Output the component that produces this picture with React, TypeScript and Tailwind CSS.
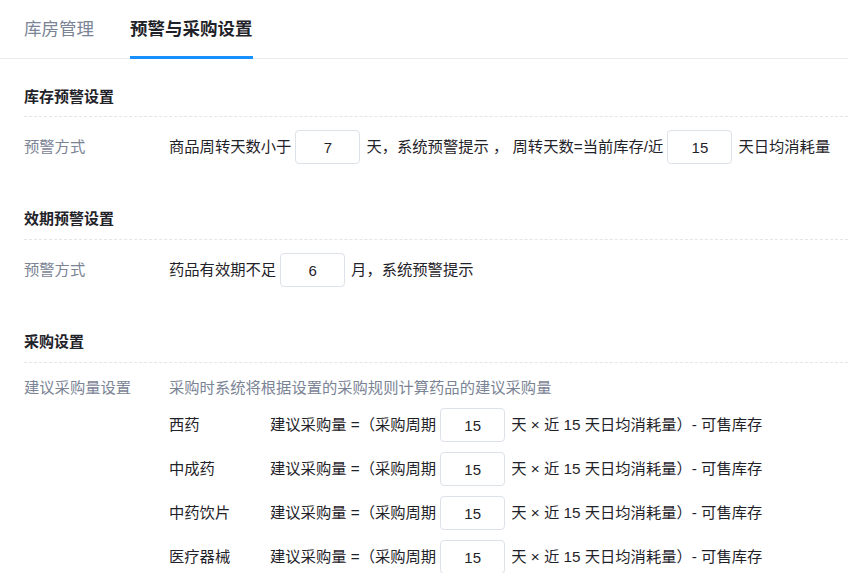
import React from "react";

const font = { fontFamily: '"Liberation Sans", "Noto Sans CJK SC", sans-serif' };

const NumBox: React.FC<{ value: string; className?: string }> = ({ value, className }) => (
  <input
    readOnly
    value={value}
    className={`h-[34px] w-[65px] rounded border border-[#dde1e8] bg-white text-center text-[15px] text-[#1f2329] outline-none ${className ?? ""}`}
  />
);

const SectionTitle: React.FC<{ title: string; first?: boolean }> = ({ title, first }) => (
  <div
    className={`${first ? "mt-[28px] pb-[9px]" : "mt-[45px] pb-[10px]"} border-b border-dashed border-[#e3e5e9] text-[15px] font-bold leading-5 text-[#1f2329]`}
  >
    {title}
  </div>
);

const drugTypes = ["西药", "中成药", "中药饮片", "医疗器械"];

export default function App() {
  return (
    <div className="min-h-screen w-full bg-white text-[15.3px] text-[#1f2329]" style={font}>
      <div className="flex h-[59px] gap-9 border-b border-[#e8eaed] px-6">
        <div className="flex h-[59px] items-center border-b-[3px] border-transparent pt-[3px] text-[17.5px] text-[#7b8495]">
          库房管理
        </div>
        <div className="flex h-[59px] items-center border-b-[3px] border-[#1890ff] pt-[3px] text-[17.5px] font-bold text-[#1f2329]">
          预警与采购设置
        </div>
      </div>

      <div className="pl-6">
        <SectionTitle title="库存预警设置" first />
        <div className="flex items-start pt-[13px]">
          <div className="w-[145px] shrink-0 leading-[34px] text-[#7b8495]">预警方式</div>
          <div className="flex items-center whitespace-nowrap">
            <span>商品周转天数小于</span>
            <NumBox value="7" className="ml-1 mr-[6px]" />
            <span>天，系统预警提示 ， 周转天数=当前库存/近</span>
            <NumBox value="15" className="ml-1 mr-[6px]" />
            <span>天日均消耗量</span>
          </div>
        </div>

        <SectionTitle title="效期预警设置" />
        <div className="flex items-start pt-[13px]">
          <div className="w-[145px] shrink-0 leading-[34px] text-[#7b8495]">预警方式</div>
          <div className="flex items-center whitespace-nowrap">
            <span>药品有效期不足</span>
            <NumBox value="6" className="ml-1 mr-[6px]" />
            <span>月，系统预警提示</span>
          </div>
        </div>

        <SectionTitle title="采购设置" />
        <div className="flex items-start pt-[15px]">
          <div className="w-[145px] shrink-0 leading-5 text-[#7b8495]">建议采购量设置</div>
          <div className="flex flex-col">
            <div className="leading-5 text-[#7b8495]">采购时系统将根据设置的采购规则计算药品的建议采购量</div>
            <div className="mt-[10px] flex flex-col gap-[10px]">
              {drugTypes.map((t) => (
                <div key={t} className="flex items-center whitespace-nowrap">
                  <span className="w-[101px] shrink-0">{t}</span>
                  <span>建议采购量 =（采购周期</span>
                  <NumBox value="15" className="ml-1 mr-[6px]" />
                  <span>天 × 近 15 天日均消耗量）- 可售库存</span>
                </div>
              ))}
            </div>
          </div>
        </div>
      </div>
    </div>
  );
}
